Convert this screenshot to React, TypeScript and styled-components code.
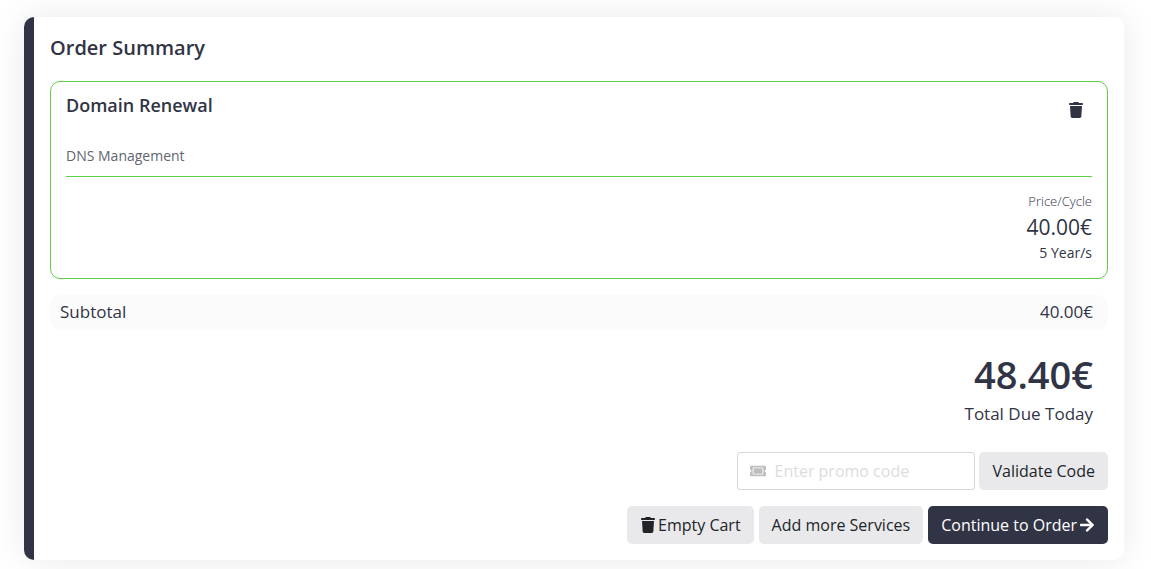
import React from "react";
import styled, { createGlobalStyle, css } from "styled-components";
import { FaArrowRight, FaTicketAlt } from "react-icons/fa";
import { FaTrash } from "react-icons/fa6";

const GlobalStyle = createGlobalStyle`
  *, *::before, *::after { box-sizing: border-box; }
  body {
    margin: 0;
    background: #fff;
    color: #313445;
    font-family: "Open Sans", "Noto Sans", sans-serif;
    font-size: 16px;
    line-height: 24px;
  }
  h1, h2, p, dl, dt, dd { margin: 0; }
  button, input { font: inherit; }
`;

const Page = styled.main`
  padding: 17px 27px 9px 24px;
`;

const Card = styled.section`
  padding: 16px;
  border-left: 10px solid #313445;
  border-radius: 10px;
  background: #fff;
  box-shadow: 0 0 35px rgba(0, 0, 0, 0.09);
`;

const Title = styled.h1`
  margin-bottom: 18px;
  font-size: 20px;
  font-weight: 600;
  line-height: 30px;
`;

const Item = styled.article`
  padding: 10px 15px 13px;
  border: 1px solid #61ce48;
  border-radius: 10px;
`;

const ItemHeader = styled.header`
  display: flex;
  justify-content: space-between;
  align-items: flex-start;
`;

const ItemName = styled.h2`
  font-size: 18px;
  font-weight: 600;
  line-height: 26px;
`;

const IconButton = styled.button`
  display: flex;
  padding: 10px 8px;
  border: 0;
  background: none;
  color: #313445;
  font-size: 16px;
  cursor: pointer;
`;

const Addon = styled.p`
  padding: 17px 0 9px;
  border-bottom: 1px solid #61ce48;
  color: #62656f;
  font-size: 14px;
  line-height: 22px;
`;

const Pricing = styled.div`
  padding-top: 12px;
  text-align: right;
`;

const PriceLabel = styled.p`
  font-size: 13px;
  font-weight: 300;
  line-height: 24px;
`;

const Price = styled.p`
  font-size: 21px;
  line-height: 28px;
`;

const Cycle = styled.p`
  font-size: 14px;
  line-height: 24px;
`;

const Subtotal = styled.dl`
  display: flex;
  justify-content: space-between;
  margin-top: 16px;
  padding: 5px 15px 6px 10px;
  border-radius: 10px;
  background: #fbfbfb;
  font-size: 17px;
`;

const Total = styled.div`
  margin-top: 16px;
  padding-right: 15px;
  text-align: right;
`;

const TotalAmount = styled.p`
  font-size: 38px;
  font-weight: 600;
  line-height: 56px;
`;

const TotalLabel = styled.p`
  font-size: 17px;
`;

const Actions = styled.div`
  display: flex;
  flex-wrap: wrap;
  justify-content: flex-end;
  gap: 5px;
  margin-top: 16px;
`;

const PromoForm = styled.form`
  display: flex;
  justify-content: flex-end;
  gap: 4px;
  margin-top: 26px;
`;

const PromoField = styled.label`
  display: flex;
  align-items: center;
  gap: 8px;
  width: 238px;
  height: 38px;
  padding: 0 12px;
  border: 1px solid #d8d8da;
  border-radius: 3px;
  color: #bdbdbd;
`;

const PromoInput = styled.input`
  flex: 1;
  min-width: 0;
  padding: 0;
  border: 0;
  outline: 0;
  background: none;
  color: #313445;
  &::placeholder { color: #dcdcde; opacity: 1; }
`;

const Button = styled.button<{ $primary?: boolean }>`
  display: flex;
  align-items: center;
  gap: 2px;
  height: 38px;
  padding: 0 13px;
  border: 0;
  border-radius: 5px;
  background: #e9e9eb;
  color: #212529;
  white-space: nowrap;
  cursor: pointer;
  ${({ $primary }) =>
    $primary &&
    css`
      background: #313445;
      color: #fff;
    `}
`;

export default function App() {
  return (
    <>
      <GlobalStyle />
      <Page>
        <Card>
          <Title>Order Summary</Title>
          <Item>
            <ItemHeader>
              <ItemName>Domain Renewal</ItemName>
              <IconButton type="button" aria-label="Remove item">
                <FaTrash />
              </IconButton>
            </ItemHeader>
            <Addon>DNS Management</Addon>
            <Pricing>
              <PriceLabel>Price/Cycle</PriceLabel>
              <Price>40.00€</Price>
              <Cycle>5 Year/s</Cycle>
            </Pricing>
          </Item>
          <Subtotal>
            <dt>Subtotal</dt>
            <dd>40.00€</dd>
          </Subtotal>
          <Total>
            <TotalAmount>48.40€</TotalAmount>
            <TotalLabel>Total Due Today</TotalLabel>
          </Total>
          <PromoForm onSubmit={(event) => event.preventDefault()}>
            <PromoField>
              <FaTicketAlt size={16} aria-hidden="true" />
              <PromoInput
                type="text"
                name="promo"
                aria-label="Promo code"
                placeholder="Enter promo code"
              />
            </PromoField>
            <Button type="submit">Validate Code</Button>
          </PromoForm>
          <Actions>
            <Button type="button">
              <FaTrash aria-hidden="true" />
              Empty Cart
            </Button>
            <Button type="button">Add more Services</Button>
            <Button type="button" $primary>
              Continue to Order
              <FaArrowRight aria-hidden="true" />
            </Button>
          </Actions>
        </Card>
      </Page>
    </>
  );
}
